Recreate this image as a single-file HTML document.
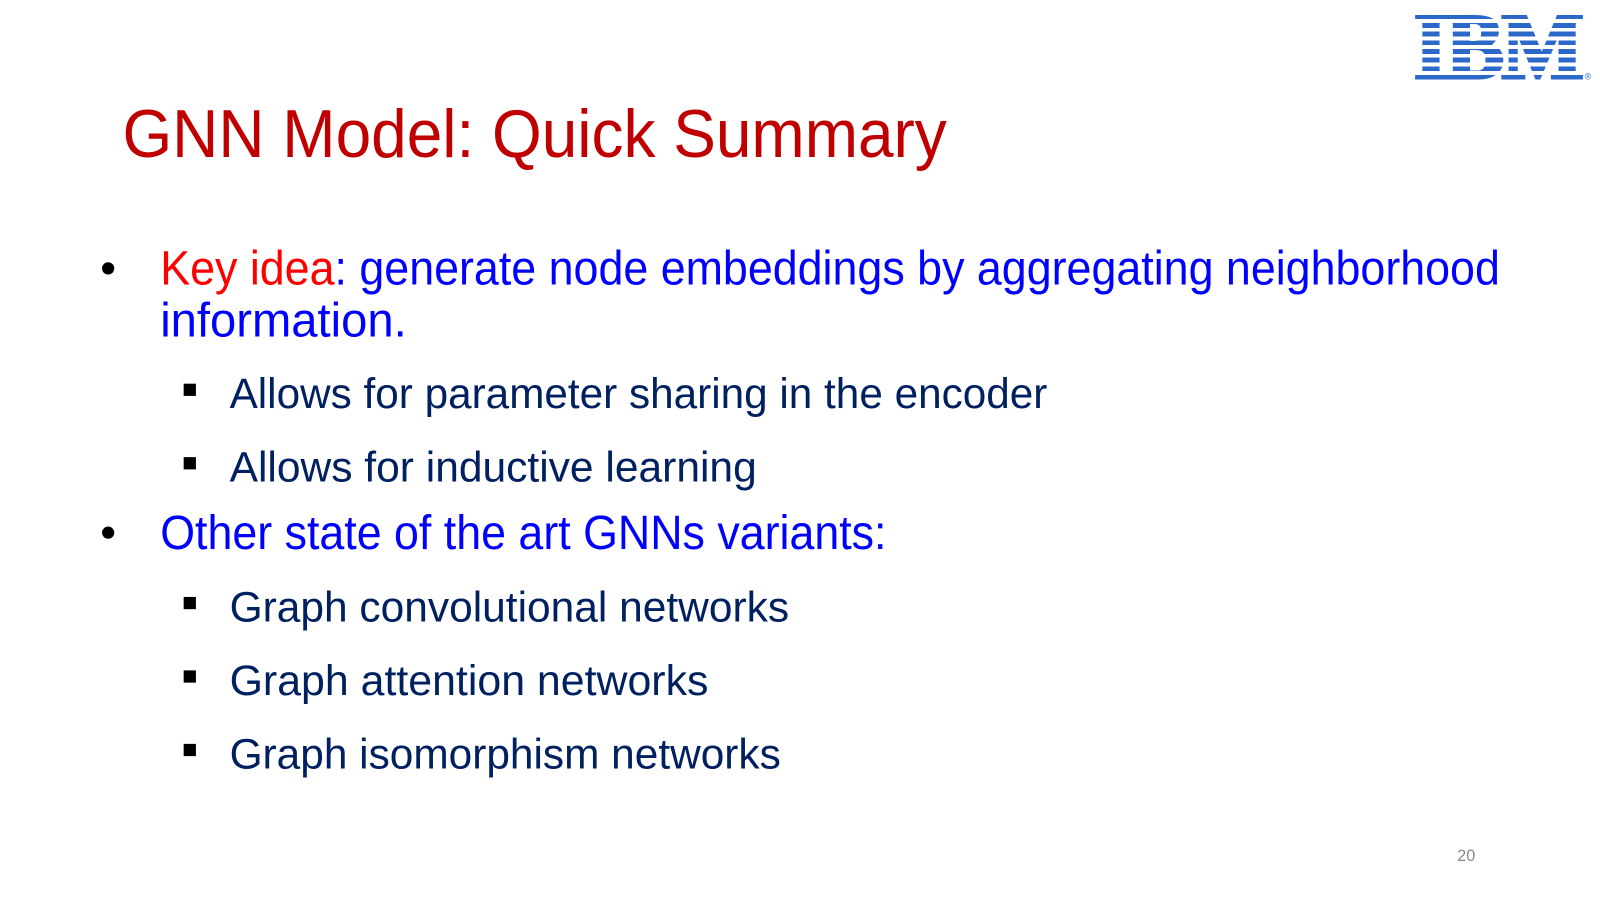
<!DOCTYPE html>
<html><head><meta charset="utf-8"><style>
body{margin:0;width:1600px;height:900px;background:#fff;position:relative;overflow:hidden;font-family:"Liberation Sans",sans-serif}
#wrap{position:absolute;left:0;top:0;width:1600px;height:900px;transform:scale(1.0204);transform-origin:0 0}
.t{position:absolute;white-space:nowrap;transform-origin:0 0;line-height:1}
.dot{position:absolute;width:12px;height:12px;border-radius:50%;background:#000}
.sq{position:absolute;width:12px;height:12px;background:#000}
</style></head><body>
<div id="wrap">
<div id="ibm" style="position:absolute;left:1384px;top:14px;width:168px;height:66px;overflow:hidden">
<div id="ibmt" style="font-family:'Liberation Serif',serif;font-weight:bold;font-size:90px;color:#2b68c9;line-height:66px;transform-origin:0 0;-webkit-text-stroke:4px #2b68c9;letter-spacing:-2px;padding-left:2px">IBM</div>
<div style="position:absolute;left:0;top:0;width:100%;height:100%;background:repeating-linear-gradient(to bottom,transparent 0 4.8px,#fff 4.8px 8.5px)"></div>
</div>
<div style="position:absolute;left:1553px;top:70px;font-size:9px;color:#2b68c9">®</div>
<div class="t" w="808" style="left:120px;top:98px;font-size:66px;color:#c00000">GNN Model: Quick Summary</div>
<div class="dot" style="left:100px;top:257px"></div>
<div class="t" w="1313" style="left:157px;top:239px;font-size:47px;color:#0000ff"><span style="color:#ff0000">Key idea</span>: generate node embeddings by aggregating neighborhood</div>
<div class="t" w="242" style="left:157px;top:290px;font-size:47px;color:#0000ff">information.</div>
<div class="sq" style="left:180px;top:376px"></div>
<div class="t" w="801" style="left:225px;top:365px;font-size:42px;color:#002060">Allows for parameter sharing in the encoder</div>
<div class="sq" style="left:180px;top:448px"></div>
<div class="t" w="517" style="left:225px;top:437px;font-size:42px;color:#002060">Allows for inductive learning</div>
<div class="dot" style="left:100px;top:516px"></div>
<div class="t" w="712" style="left:157px;top:498px;font-size:47px;color:#0000ff">Other state of the art GNNs variants:</div>
<div class="sq" style="left:180px;top:585px"></div>
<div class="t" w="548" style="left:225px;top:574px;font-size:42px;color:#002060">Graph convolutional networks</div>
<div class="sq" style="left:180px;top:657px"></div>
<div class="t" w="469" style="left:225px;top:646px;font-size:42px;color:#002060">Graph attention networks</div>
<div class="sq" style="left:180px;top:729px"></div>
<div class="t" w="540" style="left:225px;top:718px;font-size:42px;color:#002060">Graph isomorphism networks</div>
<div class="t" style="left:1428px;top:832px;font-size:16px;color:#888">20</div>
</div>
<script>
document.querySelectorAll('.t[w]').forEach(function(e){var w=+e.getAttribute('w');var r=e.offsetWidth;if(r>0)e.style.transform='scaleX('+(w/r)+')';});
var it=document.getElementById('ibmt');it.style.display='inline-block';var iw=it.offsetWidth;if(iw>0)it.style.transform='scaleX('+(166/iw)+')';
</script>
</body></html>
